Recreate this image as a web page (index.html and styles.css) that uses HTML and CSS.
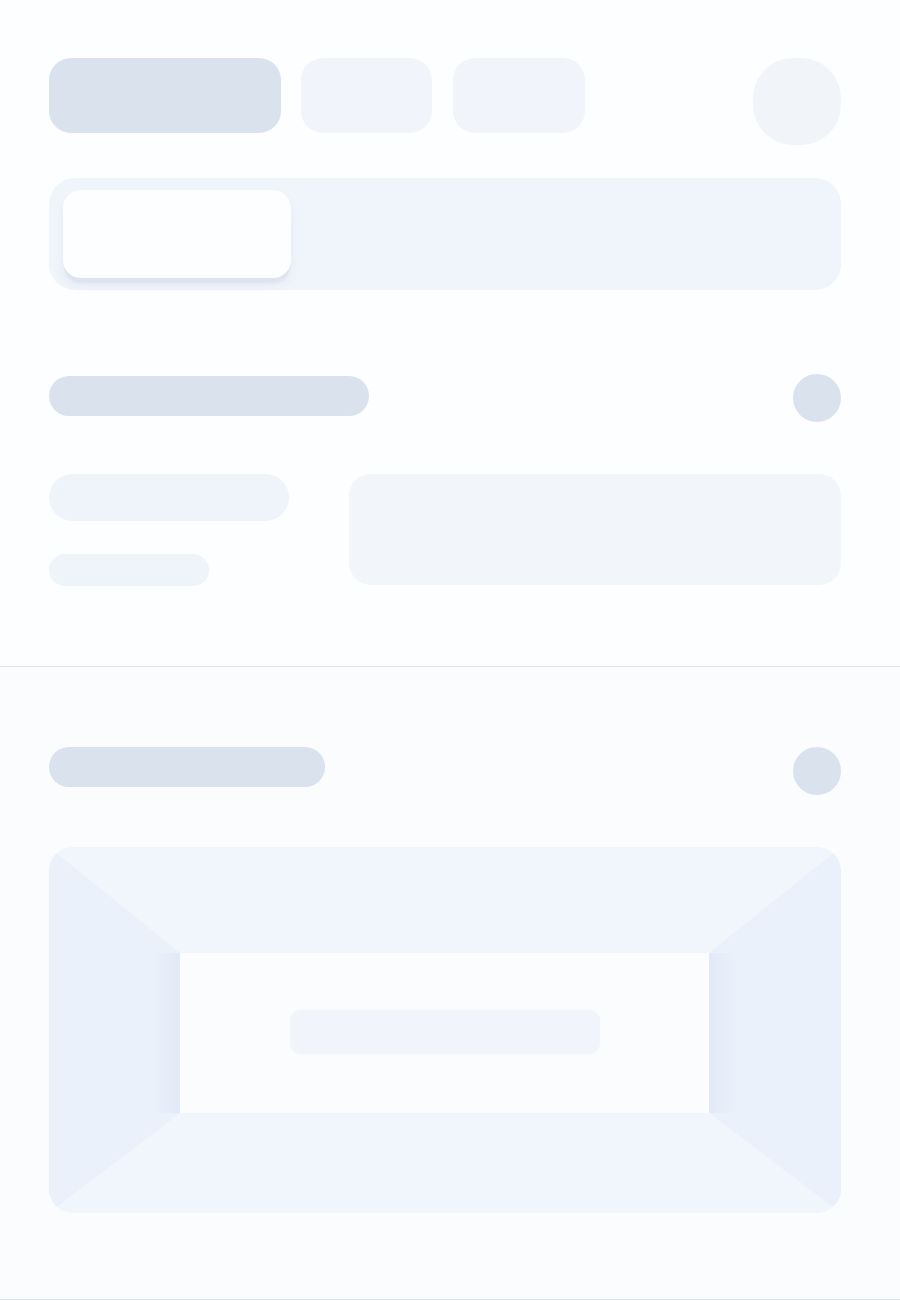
FILE: index.html
```html
<!DOCTYPE html>
<html lang="en">
<head>
<meta charset="utf-8">
<title>Loading</title>
<link rel="stylesheet" href="styles.css">
</head>
<body>
<div class="page">
  <section class="sec sec-top">
    <div class="tabs">
      <div class="tab tab-active"></div>
      <div class="tab tab-b"></div>
      <div class="tab tab-c"></div>
      <div class="spacer"></div>
      <div class="avatar"></div>
    </div>
    <div class="segment">
      <div class="seg-pill"></div>
    </div>
    <div class="head head-1">
      <div class="bar bar-1"></div>
      <div class="dot"></div>
    </div>
    <div class="row">
      <div class="col">
        <div class="line line-1"></div>
        <div class="line line-2"></div>
      </div>
      <div class="card"></div>
    </div>
  </section>
  <section class="sec sec-bottom">
    <div class="head">
      <div class="bar bar-2"></div>
      <div class="dot"></div>
    </div>
    <div class="frame">
      <div class="frame-inner">
        <div class="frame-bar"></div>
      </div>
    </div>
  </section>
</div>
</body>
</html>
```

FILE: styles.css
```css
* { box-sizing: border-box; }
html, body { margin: 0; padding: 0; }
body {
  background: #fcfdfe;
  font-family: "Inter", "Liberation Sans", sans-serif;
  width: 900px;
  height: 1300px;
  overflow: hidden;
}
.page { width: 900px; }
.sec { padding: 0 59px 0 49px; }
.sec-top {
  background: #fdfeff;
  padding-top: 58px;
  padding-bottom: 80px;
  border-bottom: 1px solid #dde3ee;
}
.sec-bottom {
  background: #fafcfe;
  padding-top: 80px;
  padding-bottom: 86px;
  border-bottom: 2px solid #dde3ee;
}
.tabs { display: flex; align-items: flex-start; }
.tab { height: 75px; border-radius: 22px; background: #f1f5fb; }
.tab-active { width: 232px; background: #dae2ee; }
.tab-b { width: 131px; margin-left: 20px; }
.tab-c { width: 132px; margin-left: 21px; }
.spacer { flex: 1; }
.avatar { width: 88px; height: 87px; border-radius: 40px; background: #f1f5fa; }
.segment {
  margin-top: 33px;
  height: 112px;
  border-radius: 26px;
  background: #f0f4fb;
  padding: 12px 14px;
}
.seg-pill {
  width: 228px;
  height: 88px;
  border-radius: 18px;
  background: #fdfeff;
  box-shadow: 0 6px 2px -1px #dde4f0, 0 8px 8px rgba(200, 210, 230, 0.25);
}
.head { display: flex; justify-content: space-between; align-items: flex-start; }
.head-1 { margin-top: 84px; }
.head-1 .bar { margin-top: 2px; }
.bar { height: 40px; border-radius: 20px; background: #dae2ee; }
.bar-1 { width: 320px; }
.bar-2 { width: 276px; }
.dot { width: 48px; height: 48px; border-radius: 50%; background: #dae2ee; }
.row { display: flex; margin-top: 52px; align-items: flex-start; }
.col { width: 240px; display: flex; flex-direction: column; gap: 33px; }
.line { border-radius: 24px; background: #eff3fa; }
.line-1 { width: 240px; height: 47px; }
.line-2 { width: 160px; height: 32px; border-radius: 16px; }
.card {
  margin-left: 60px;
  flex: 1;
  height: 111px;
  border-radius: 22px;
  background: #f2f6fb;
}
.frame {
  margin-top: 52px;
  height: 366px;
  border-radius: 24px;
  border-style: solid;
  border-width: 106px 132px 100px 131px;
  border-color: #f1f5fc #ebf1fb #f1f5fc #ebf1fb;
  background: #fbfcfe;
  display: flex;
}
.frame-inner {
  position: relative;
  flex: 1;
  display: flex;
  align-items: center;
  justify-content: center;
  background: #fbfcfe;
}
.frame-inner::before,
.frame-inner::after {
  content: "";
  position: absolute;
  top: 0;
  bottom: 0;
  width: 28px;
}
.frame-inner::before {
  left: -28px;
  background: linear-gradient(to right, rgba(232, 238, 250, 0), rgba(222, 230, 245, 0.7));
}
.frame-inner::after {
  right: -28px;
  background: linear-gradient(to left, rgba(232, 238, 250, 0), rgba(222, 230, 245, 0.7));
}
.frame-bar {
  width: 310px;
  height: 44px;
  border-radius: 10px;
  background: #f1f5fb;
  margin-top: -3px;
}
```
